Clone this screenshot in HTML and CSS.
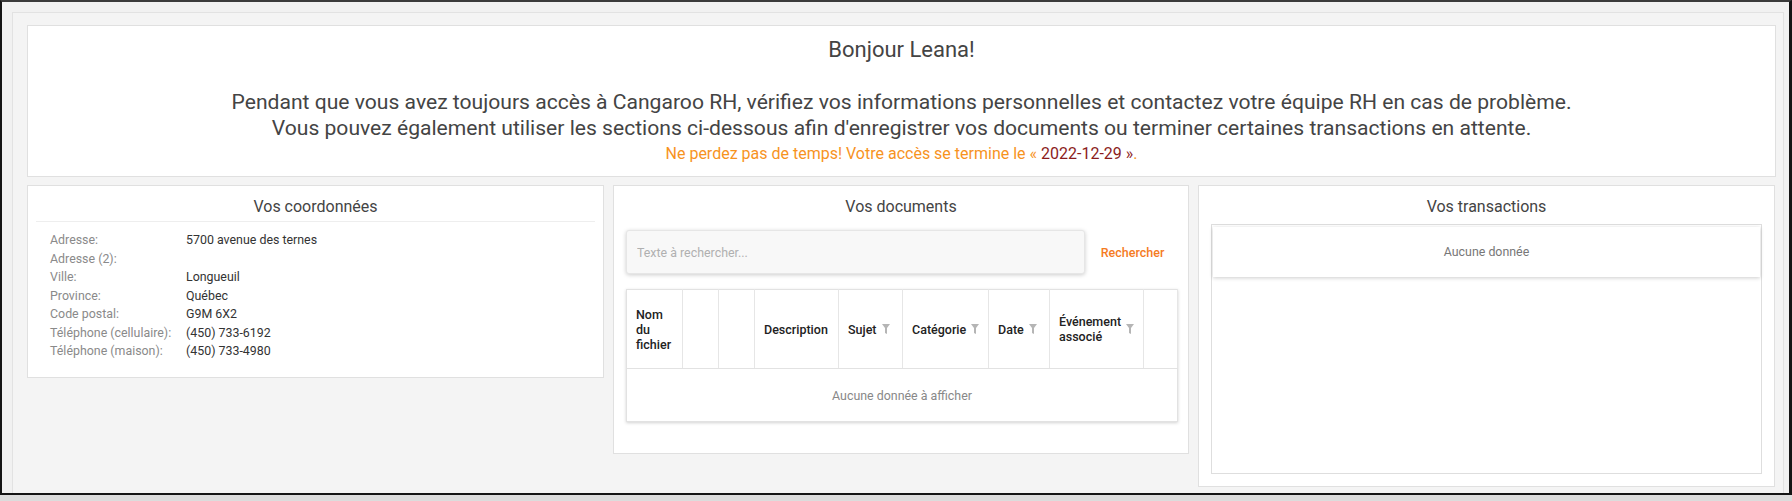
FILE: index.html
```html
<!DOCTYPE html>
<html>
  <head>
    <title>Portail employé</title>
    <link rel="stylesheet" href="styles.css">
  </head>
  <body>
    <div class="window">
      <div class="panel">
        <div class="card welcome">
          <h1>Bonjour Leana!</h1>
          <p>
            Pendant que vous avez toujours accès à Cangaroo RH, vérifiez vos informations personnelles et contactez votre équipe RH en cas de problème.<br>
            Vous pouvez également utiliser les sections ci-dessous afin d'enregistrer vos documents ou terminer certaines transactions en attente.
          </p>
          <div class="deadline">
            Ne perdez pas de temps! Votre accès se termine le « <span class="date">2022-12-29 »</span>.
          </div>
        </div>

        <div class="columns">
          <div class="card col">
            <h2 class="col-title with-line">Vos coordonnées</h2>
            <div class="info">
              <div class="label">Adresse:</div><div class="value">5700 avenue des ternes</div>
              <div class="label">Adresse (2):</div><div class="value"></div>
              <div class="label">Ville:</div><div class="value">Longueuil</div>
              <div class="label">Province:</div><div class="value">Québec</div>
              <div class="label">Code postal:</div><div class="value">G9M 6X2</div>
              <div class="label">Téléphone (cellulaire):</div><div class="value">(450) 733-6192</div>
              <div class="label">Téléphone (maison):</div><div class="value">(450) 733-4980</div>
            </div>
          </div>

          <div class="card col docs">
            <h2 class="col-title">Vos documents</h2>
            <div class="search">
              <input type="text" placeholder="Texte à rechercher..." />
              <button>Rechercher</button>
            </div>
            <table class="grid">
              <colgroup>
                <col style="width: 56px">
                <col style="width: 36px">
                <col style="width: 36px">
                <col style="width: 84px">
                <col style="width: 64px">
                <col style="width: 86px">
                <col style="width: 61px">
                <col style="width: 94px">
                <col style="width: 34px">
              </colgroup>
              <thead>
                <tr>
                  <th>Nom du fichier</th>
                  <th></th>
                  <th></th>
                  <th>Description</th>
                  <th><span class="th">Sujet <svg class="filter" viewBox="0 0 8 10"><path d="M0 0H8L5 4V10L3 9V4Z"/></svg></span></th>
                  <th><span class="th">Catégorie <svg class="filter" viewBox="0 0 8 10"><path d="M0 0H8L5 4V10L3 9V4Z"/></svg></span></th>
                  <th><span class="th">Date <svg class="filter" viewBox="0 0 8 10"><path d="M0 0H8L5 4V10L3 9V4Z"/></svg></span></th>
                  <th><span class="th">Événement associé <svg class="filter" viewBox="0 0 8 10"><path d="M0 0H8L5 4V10L3 9V4Z"/></svg></span></th>
                  <th></th>
                </tr>
              </thead>
              <tbody>
                <tr>
                  <td colspan="9" class="empty">Aucune donnée à afficher</td>
                </tr>
              </tbody>
            </table>
          </div>

          <div class="card col trans">
            <h2 class="col-title">Vos transactions</h2>
            <div class="trans-box">
              <div class="trans-empty">Aucune donnée</div>
            </div>
          </div>
        </div>
      </div>
    </div>
  </body>
</html>
```

FILE: styles.css
```css
body {
  margin: 0;
  background-color: #dcdcdc;
  font-family: Roboto, "Liberation Sans", sans-serif;
  color: #444;
  height: 501px;
  overflow: hidden;
}
.window {
  box-sizing: border-box;
  width: 1792px;
  height: 495px;
  border: 2px solid #151515;
  border-right-width: 3px;
  border-top-color: #3a3a3a;
  background-color: #f1f1f1;
  padding: 10px 5px 0 10px;
  overflow: hidden;
}
.panel {
  height: 100%;
  border: 1px solid #e2e2e2;
  border-bottom: none;
  background-color: #f4f4f4;
  padding: 12px 7px 0 14px;
}
.card {
  background-color: #fff;
  border: 1px solid #e0e0e0;
  box-sizing: border-box;
}
.welcome {
  height: 152px;
  padding: 11px 20px 0;
  text-align: center;
}
.welcome h1 {
  margin: 0 0 26px;
  font-size: 22px;
  line-height: 26px;
  font-weight: 400;
  color: #444;
}
.welcome p {
  margin: 0;
  font-size: 21.1px;
  line-height: 25.5px;
  color: #444;
}
.deadline {
  margin-top: 4px;
  font-size: 16px;
  line-height: 19px;
  color: #f7931e;
}
.deadline .date {
  color: #8b1c1c;
}
.columns {
  display: grid;
  grid-template-columns: 577px 576px 577px;
  gap: 9px;
  margin-top: 8px;
  align-items: start;
}
.col {
  padding: 10px 8px 0;
}
.col-title {
  margin: 0;
  font-size: 16px;
  line-height: 22px;
  font-weight: 400;
  text-align: center;
  color: #444;
}
.with-line {
  padding-bottom: 3px;
  border-bottom: 1px solid #eee;
}
.info {
  display: grid;
  grid-template-columns: 136px 1fr;
  padding: 9px 14px 16px;
  font-size: 12.4px;
  line-height: 18.5px;
}
.label {
  color: #8a8a8a;
}
.value {
  color: #333;
  min-height: 18.5px;
}
.docs {
  padding: 10px 12px 31px;
}
.search {
  display: flex;
  margin-top: 12px;
  align-items: center;
}
.search input {
  flex: 1;
  height: 44px;
  box-sizing: border-box;
  border: 1px solid #e6e6e6;
  border-radius: 3px;
  background-color: #f8f8f8;
  box-shadow: 0 1px 4px rgba(0, 0, 0, 0.2);
  padding: 0 10px;
  font-family: inherit;
  font-size: 12.4px;
  outline: none;
}
.search input::placeholder {
  color: #b0b0b0;
}
.search button {
  width: 91px;
  border: none;
  background: none;
  color: #f57c1f;
  font-family: inherit;
  font-size: 12.5px;
  font-weight: 500;
  padding: 0 0 0 4px;
}
.grid {
  width: 551px;
  margin-top: 15px;
  border-collapse: collapse;
  table-layout: fixed;
  border: 1px solid #e2e2e2;
  box-shadow: 0 1px 3px rgba(0, 0, 0, 0.18);
}
.grid th {
  height: 78px;
  border-right: 1px solid #e6e6e6;
  border-bottom: 1px solid #e2e2e2;
  padding: 0 9px;
  text-align: left;
  font-size: 12.5px;
  line-height: 15px;
  font-weight: 500;
  color: #222;
}
.th {
  display: flex;
  align-items: center;
  gap: 5px;
}
.filter {
  width: 8px;
  height: 10px;
  fill: #b5b5b5;
  flex-shrink: 0;
}
.empty {
  height: 50px;
  text-align: center;
  font-size: 12.4px;
  color: #888;
}
.trans {
  padding: 10px 12px 12px;
}
.trans-box {
  margin-top: 6px;
  height: 250px;
  box-sizing: border-box;
  border: 1px solid #dedede;
  padding: 2px 1px;
}
.trans-empty {
  height: 50px;
  line-height: 50px;
  text-align: center;
  font-size: 12.4px;
  color: #777;
  background-color: #fff;
  box-shadow: 0 1px 4px rgba(0, 0, 0, 0.2);
}
```
